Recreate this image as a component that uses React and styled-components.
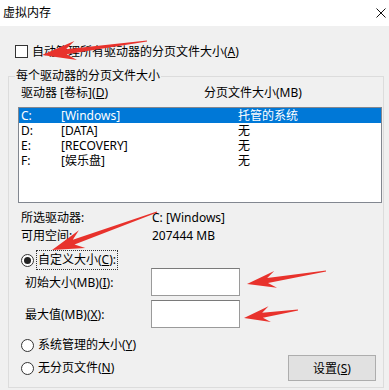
import React from 'react';
import styled, { createGlobalStyle } from 'styled-components';

const GlobalStyle = createGlobalStyle`
  html, body {
    margin: 0;
    padding: 0;
    background: #f0f0f0;
  }
  body {
    font-family: "Noto Sans", "Noto Sans CJK SC", sans-serif;
    font-size: 12px;
    color: #000;
  }
`

const Window = styled.div`
  position: relative;
  width: 389px;
  height: 390px;
  background: #f0f0f0;
  overflow: hidden;
`
const TitleBar = styled.div`
  height: 26px;
  background: #fff;
  display: flex;
  align-items: center;
  justify-content: space-between;
  padding: 0 3px;
`
const Title = styled.span`
  line-height: 16px;
`
const Body = styled.div`
  padding: 0 5px 0 8px;
`
const CheckRow = styled.label`
  margin-top: 17px;
  height: 16px;
  display: flex;
  align-items: center;
  gap: 4px;
  padding-left: 7px;
`
const CheckBox = styled.span`
  width: 13px;
  height: 13px;
  box-sizing: border-box;
  border: 1px solid #333;
  background: #fff;
`
const Group = styled.fieldset`
  margin: 9px 0 0;
  padding: 0 1px 6px 9px;
  border: 1px solid #dcdcdc;
  min-width: 0;
`
const Legend = styled.legend`
  padding: 0 1px;
  margin-left: -3px;
  line-height: 16px;
`
const ColumnHeader = styled.div`
  margin-top: 1px;
  display: grid;
  grid-template-columns: 183px 1fr;
  padding-left: 3px;
  line-height: 16px;
`
const DriveList = styled.div`
  margin-top: 6px;
  height: 96px;
  box-sizing: border-box;
  border: 1px solid #828790;
  background: #fff;
`
const DriveRow = styled.div`
  display: grid;
  grid-template-columns: 40px 177px 1fr;
  align-items: center;
  height: 15px;
  line-height: 14px;
  padding-left: 2px;
  background: ${({ selected }) => (selected ? '#0078d7' : 'transparent')};
  color: ${({ selected }) => (selected ? '#fff' : '#000')};
`
const Info = styled.div`
  margin-top: 5px;
  display: grid;
  grid-template-columns: 131px 1fr;
  grid-auto-rows: 18px;
  align-items: center;
  padding-left: 3px;
`
const RadioRow = styled.label`
  grid-column: 1;
  display: flex;
  align-items: center;
  padding-left: 3px;
  height: ${({ tall }) => (tall ? '20px' : '16px')};
  margin-top: ${({ tall }) => (tall ? '6px' : '0')};
`
const Radio = styled.span`
  width: 13px;
  height: 13px;
  box-sizing: border-box;
  border: 1px solid #333;
  border-radius: 50%;
  background: #fff;
  display: flex;
  align-items: center;
  justify-content: center;
  &::after {
    content: '';
    width: 7px;
    height: 7px;
    border-radius: 50%;
    background: ${({ checked }) => (checked ? '#222' : 'transparent')};
  }
`
const RadioText = styled.span`
  margin-left: ${({ focused }) => (focused ? '2px' : '3px')};
  padding: 0 1px;
  line-height: 18px;
  border: ${({ focused }) => (focused ? '1px dotted #333' : 'none')};
`
const SizeFields = styled.div`
  margin-top: -2px;
  display: flex;
  flex-direction: column;
  gap: 4px;
`
const FieldRow = styled.label`
  display: grid;
  grid-template-columns: 126px 89px;
  align-items: center;
  padding-left: 7px;
  height: 28px;
`
const TextBox = styled.span`
  height: 28px;
  box-sizing: border-box;
  border: 1px solid #9a9a9a;
  border-top-color: #7a7a7a;
  background: #fff;
`
const Footer = styled.div`
  margin-top: 9px;
  display: grid;
  grid-template-columns: 1fr auto;
  row-gap: 2px;
  align-items: center;
`
const Button = styled.button`
  grid-column: 2;
  grid-row: 2;
  width: 88px;
  height: 26px;
  margin-right: 6px;
  background: #e1e1e1;
  border: 1px solid #adadad;
  font: inherit;
  color: #000;
  padding: 0;
`
const Overlay = styled.svg`
  position: absolute;
  left: 0;
  top: 0;
  pointer-events: none;
`

const drives = [
  { letter: 'C:', label: '[Windows]', size: '托管的系统', selected: true },
  { letter: 'D:', label: '[DATA]', size: '无' },
  { letter: 'E:', label: '[RECOVERY]', size: '无' },
  { letter: 'F:', label: '[娱乐盘]', size: '无' },
];

// red annotation arrows: tail, tip, head length, head width
const arrows = [
  [147, 41, 42, 55, 34, 19],
  [157, 212, 52, 250, 32, 19],
  [326, 271, 247, 284, 29, 17],
  [298, 310, 244, 318, 26, 16],
];

let arrowPoints = ([x1, y1, x2, y2, hl, hw]) => {
  let dx = x2 - x1, dy = y2 - y1;
  let len = Math.hypot(dx, dy);
  let ux = dx / len, uy = dy / len;
  let nx = -uy, ny = ux;
  let at = (d, w) => [x2 - ux * d + nx * w, y2 - uy * d + ny * w];
  let pts = [
    [x1 + nx * 0.5, y1 + ny * 0.5],
    at(hl * 0.72, 2.5),
    at(hl, hw / 2),
    [x2, y2],
    at(hl, -hw / 2),
    at(hl * 0.72, -2.5),
    [x1 - nx * 0.5, y1 - ny * 0.5],
  ];
  return pts.map((p) => p.map((v) => v.toFixed(1)).join(',')).join(' ');
}

let App = () => {
  return (
    <Window>
      <GlobalStyle />
      <TitleBar>
        <Title>虚拟内存</Title>
        <svg width="10" height="10" viewBox="0 0 10 10">
          <path d="M0.5 0.5 L9.5 9.5 M9.5 0.5 L0.5 9.5" stroke="#111" strokeWidth="1" />
        </svg>
      </TitleBar>
      <Body>
        <CheckRow>
          <CheckBox />
          <span>自动管理所有驱动器的分页文件大小(<u>A</u>)</span>
        </CheckRow>
        <Group>
          <Legend>每个驱动器的分页文件大小</Legend>
          <ColumnHeader>
            <span>驱动器 [卷标](<u>D</u>)</span>
            <span>分页文件大小(MB)</span>
          </ColumnHeader>
          <DriveList>
            {drives.map((d) => (
              <DriveRow key={d.letter} selected={d.selected}>
                <span>{d.letter}</span>
                <span>{d.label}</span>
                <span>{d.size}</span>
              </DriveRow>
            ))}
          </DriveList>
          <Info>
            <span>所选驱动器:</span>
            <span>C:  [Windows]</span>
            <span>可用空间:</span>
            <span>207444 MB</span>
          </Info>
          <RadioRow tall>
            <Radio checked />
            <RadioText focused>自定义大小(<u>C</u>):</RadioText>
          </RadioRow>
          <SizeFields>
            <FieldRow>
              <span>初始大小(MB)(<u>I</u>):</span>
              <TextBox />
            </FieldRow>
            <FieldRow>
              <span>最大值(MB)(<u>X</u>):</span>
              <TextBox />
            </FieldRow>
          </SizeFields>
          <Footer>
            <RadioRow>
              <Radio />
              <RadioText>系统管理的大小(<u>Y</u>)</RadioText>
            </RadioRow>
            <RadioRow>
              <Radio />
              <RadioText>无分页文件(<u>N</u>)</RadioText>
            </RadioRow>
            <Button>设置(<u>S</u>)</Button>
          </Footer>
        </Group>
      </Body>
      <Overlay width="389" height="390" viewBox="0 0 389 390">
        {arrows.map((a, i) => (
          <polygon key={i} points={arrowPoints(a)} fill="#e8322c" />
        ))}
      </Overlay>
    </Window>
  )
}

export default App;
